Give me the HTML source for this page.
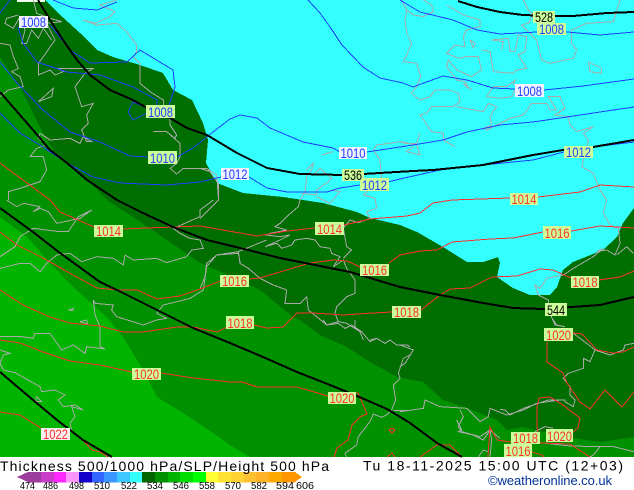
<!DOCTYPE html>
<html><head><meta charset="utf-8"><style>
html,body{margin:0;padding:0;background:#fff;width:634px;height:490px;overflow:hidden}
svg{display:block}
text{font-family:"Liberation Sans",sans-serif}
.g path{fill:none;stroke:#aaa;stroke-width:1;vector-effect:non-scaling-stroke}
.b{fill:none;stroke:#2040ff;stroke-width:1}
.r{fill:none;stroke:#ff3030;stroke-width:1}
.k{fill:none;stroke:#000;stroke-width:2}
.lt{font-size:14px;text-anchor:middle}
</style></head><body>
<svg width="634" height="490" viewBox="0 0 634 490" xmlns="http://www.w3.org/2000/svg">
<g shape-rendering="crispEdges">
<rect x="0" y="0" width="634" height="457" fill="#33ffff"/>
<polygon fill="#006e00" points="0,0 45,0 57,12 80,33 97,50 113,57 140,65 163,73 173,90 192,100 203,123 208,140 206,163 217,183 243,193 283,197 323,203 357,212 370,218 400,225 417,232 443,247 467,262 483,262 498,257 500,263 497,277 513,288 530,295 550,295 557,287 563,270 573,262 603,250 617,237 623,223 634,208 634,457 0,457"/>
<polygon fill="#009000" points="0,57 20,87 40,127 57,157 80,173 107,200 133,217 167,240 200,263 233,277 260,290 293,317 300,320 320,335 347,347 370,362 397,377 423,382 443,400 467,408 497,420 507,430 523,427 543,432 573,438 600,442 634,437 634,457 0,457"/>
<polygon fill="#00b400" points="0,217 27,237 50,263 73,287 107,317 123,337 143,370 157,397 183,413 213,433 230,445 250,457 0,457"/>
</g>
<g shape-rendering="crispEdges">
<rect x="17" y="0" width="28" height="2" fill="#f0fff0"/>
<g class="g" transform="scale(.33333)">
<path d="M350,0 300,15 345,35 330,50 285,70 250,60 290,75 350,70 380,95 410,135 410,155 400,170 420,190 420,250 450,275 490,300 490,325 510,360 510,375 530,405 525,415 500,395 460,395 500,395 540,430 540,470 530,490 510,505 530,522 550,505 620,505 650,525 655,590"/>
<path d="M100,0 110,40 150,55 185,65 140,70 165,120 130,170 115,190 115,225 150,210 165,225 190,215 170,205 240,205 280,205 255,220 225,260 245,320 280,310 260,345 265,370 245,390 260,425 275,425 250,410 240,430 210,415 150,420 120,400 115,415 140,435 110,445 90,470 130,470 140,510 120,545 60,565 25,575 25,600"/>
<path d="M55,45 20,55 15,70 40,85 60,50 75,90 65,130 80,130 95,90 115,115 130,85 155,120"/>
<path d="M0,130 30,135 40,170 55,205 35,215 60,230 70,260 25,270 0,290"/>
<path d="M115,305 160,265 155,290 115,305"/>
</g>
<g class="g" transform="translate(400,0) scale(.33333)">
<path d="M5,0 20,30 15,60 20,100 35,130 20,165 10,185 50,190 62,230 50,260 35,280 60,300 90,290 105,270 150,270 175,280 180,305 160,320 95,320 80,340 60,345 95,395 130,400 130,420 165,440"/>
<path d="M60,400 50,430 15,430 0,425"/>
<path d="M70,0 95,15 100,35 70,50 40,45 20,30"/>
<path d="M140,15 190,45 240,60 240,80 200,90 190,110 195,140 165,135 140,160 175,175 200,170 235,170 245,210 215,230 170,210 145,180 140,200 170,240 195,245 205,265 190,250 215,270"/>
<path d="M245,150 270,155 280,215 340,220 350,210 380,205 355,165 375,155 380,110 355,105 345,155 330,155 325,115 275,120 310,125 305,150"/>
<path d="M370,0 385,30 400,45 385,70 365,75 410,120 425,180 450,190 520,175 530,150 515,130 515,90 560,70 640,65 660,0"/>
<path d="M565,185 570,215 605,220 605,205 565,185"/>
<path d="M340,255 345,240 320,260 280,260 260,290 300,295 335,290 345,270"/>
<path d="M170,320 250,335 265,310 290,320 270,350 275,375 250,385 260,390 330,355 370,345 395,310 440,310 450,330 470,330 445,290 480,290 495,325 465,345 505,350 510,375 530,395 580,380 550,400 565,420 545,500 580,520 600,570 620,600"/>
<path d="M210,120 225,130 220,145 210,120"/>
</g>
<g class="g" transform="translate(200,140) scale(.33333)">
<path d="M0,85 30,95 55,130 55,180 25,210 0,235"/>
<path d="M320,90 340,70 335,90 320,110 315,155 300,180 295,200 260,230 240,250 225,260 260,270 210,280 200,285 240,290 270,285 240,300 195,320 230,310 245,325 275,315 285,300 320,295 345,300 360,320 390,325 395,340 420,350 400,380 430,360 440,385 465,420 465,460 440,470 410,500 405,520 415,545 380,555 350,530 325,510 320,470 300,490 255,490 260,450 220,435 180,415 145,385 120,370 115,335 50,345 20,370 15,410 0,445"/>
<path d="M115,335 200,300"/>
<path d="M430,355 455,330 440,320 430,265 450,240 475,248 510,235 500,215 530,205 525,175 490,165 545,120 540,60 520,30 530,15 600,5 650,15 660,45 620,35 640,20"/>
<path d="M305,160 350,165 350,150 385,125 395,115 360,85 340,105"/>
<path d="M350,170 390,190 420,155 390,150"/>
<path d="M365,45 400,35"/>
<path d="M415,545 440,550 480,575 490,600"/>
<path d="M510,600 530,595"/>
</g>
<g class="g" transform="translate(230,320) scale(.33333)">
<path d="M280,0 290,15 325,10 345,25 365,15 375,22 375,0"/>
<path d="M375,22 395,35 420,65 440,55 465,70 480,60 500,75 530,75 540,80"/>
<path d="M540,105 520,115 505,160 510,175 490,195 497,240 485,270 470,285 455,292 430,282 420,305 385,350 380,375 345,400 350,411"/>
<path d="M490,272 540,272"/>
</g>
<g class="g" transform="translate(400,200) scale(.33333)">
<path d="M620,0 610,40 630,75 655,85 660,130 645,165 620,150 590,155 610,145 580,170 520,205 490,225 440,235 420,265 405,255 415,285 445,300 450,340 465,375 495,380"/>
<path d="M0,435 40,450 15,490 0,500"/>
<path d="M650,165 680,140 700,160"/>
<path d="M180,630 190,650 175,680 185,695 240,710 270,690 300,715"/>
<path d="M0,635 70,625 75,600 120,620 200,625 240,665 265,650 270,625 320,645 370,630 410,610 480,600"/>
</g>
<g class="g" transform="translate(500,320) scale(.33333)">
<path d="M160,0 170,15 195,20"/>
<path d="M220,40 260,70 285,90 330,105 370,90 375,75 402,70"/>
<path d="M285,90 270,125 250,115 250,145 205,160 190,175 210,200 210,225 225,240 220,260 195,245 195,240 175,240 145,240 100,255 70,265 30,285 15,270 0,268"/>
<path d="M105,335 135,320 160,325"/>
<path d="M120,368 210,378 300,380 280,405 270,411"/>
<path d="M300,380 340,380 402,395"/>
</g>
<g class="g" transform="translate(320,420) scale(.33333)">
<path d="M410,0 425,30 415,35 460,45 490,60 510,30 515,60 510,110"/>
<path d="M475,110 490,90 505,95"/>
</g>
<g class="g" transform="translate(0,200) scale(.33333)">
<path d="M0,170 45,140 60,110 100,85 180,95 205,95 235,50 275,30 240,55 170,70 145,35 120,25 100,35 120,20 70,10 50,20 20,0"/>
<path d="M0,205 60,190 90,190 120,215 140,190 170,165 210,160 245,185 290,170 340,175 370,195 375,165 400,180 470,175 500,188 560,170 575,150 610,145 600,120 570,115 540,100 520,85 600,50 600,30 640,0"/>
<path d="M720,185 715,160 650,165 620,200 610,270 570,295 490,315 470,340 500,355 470,360 430,375 350,350 335,330 340,315 285,310 280,300 285,345 300,380 300,440 315,447 260,440 255,460 220,435 185,450 150,400 105,400 100,415 65,410 0,410"/>
<path d="M205,330 220,325 218,332 205,330"/>
<path d="M240,365 260,360 262,372 240,365"/>
<path d="M0,450 30,460 10,465 0,490 10,510 45,518 120,560 125,575 165,570 195,585 175,600 190,620 225,615 250,630 215,620 225,650 210,670 215,690"/>
<path d="M105,605 110,590 125,605 105,605"/>
</g>
<!-- blue -->
<path class="b" d="M53,0 73,8 97,10 117,2"/>
<path class="b" d="M0,13 10,0"/>
<path class="b" d="M18,27 23,43 37,62 67,72 100,75 133,87 157,100 157,107"/>
<path class="b" d="M147,108 133,102 128,112 133,120 147,113"/>
<path class="b" d="M50,25 70,50 90,63 127,62 140,50 173,70 175,87 168,108"/>
<path class="b" d="M0,62 17,83 43,110 70,132 100,142 130,156 148,157"/>
<path class="b" d="M177,157 193,148 213,132 230,119 240,115 257,118 270,128 303,142 333,148 340,152"/>
<path class="b" d="M367,152 413,145 443,140 467,132 500,125 533,122 567,117 600,112 634,107"/>
<path class="b" d="M0,113 20,133 43,147 67,163 93,177 120,183 167,185 200,182 221,177"/>
<path class="b" d="M249,177 267,188 287,192 327,192 340,188 360,185"/>
<path class="b" d="M388,182 400,179 440,170 483,165 533,160 564,152"/>
<path class="b" d="M593,147 634,142"/>
<path class="b" d="M308,0 320,13 330,27 342,45 363,67 380,78 403,83 413,87 443,76 467,80 493,88 515,89"/>
<path class="b" d="M544,90 583,86 634,79"/>
<path class="b" d="M400,0 420,12 453,20 477,30 500,34 537,32 567,32 600,35 634,32"/>
<!-- red -->
<path class="r" d="M0,163 27,183 50,200 60,212 94,227"/>
<path class="r" d="M123,229 147,228 200,226 257,236 287,231 315,228"/>
<path class="r" d="M344,225 370,219 407,216 420,213 433,203 452,200 510,198"/>
<path class="r" d="M538,197 580,192 600,185 634,187"/>
<path class="r" d="M0,232 17,245 43,258 73,275 97,288 117,290 137,290 157,299 180,296 203,288 220,281"/>
<path class="r" d="M249,279 260,278 280,272 310,263 333,260 347,261 360,267"/>
<path class="r" d="M389,263 400,255 420,251 437,250 452,242 490,239 513,238 543,232"/>
<path class="r" d="M571,231 600,226 634,228"/>
<path class="r" d="M0,290 23,305 50,317 70,323 100,326 123,332 143,332 177,327 193,327 217,332 227,327"/>
<path class="r" d="M254,325 267,328 283,327 297,313 313,313 343,315 373,313 392,312"/>
<path class="r" d="M421,310 440,295 450,289 470,288 492,277 517,276 540,269 553,270 571,278"/>
<path class="r" d="M599,280 620,277 634,271"/>
<path class="r" d="M0,340 20,343 43,352 70,361 100,365 132,372"/>
<path class="r" d="M161,373 193,378 230,382 242,382 257,387 297,387 328,396"/>
<path class="r" d="M356,393 358,393 367,414 360,417 352,425 348,440 337,448 334,457"/>
<path class="r" d="M420,457 437,445 450,445 462,457"/>
<path class="r" d="M389,430 392,428 395,430 392,433Z"/>
<path class="r" d="M387,457 392,453 395,457"/>
<path class="r" d="M573,333 582,334 597,350 613,353 623,352 634,347"/>
<path class="r" d="M547,342 547,362 563,373 567,383 580,402 590,409 605,390 622,407 634,392"/>
<path class="r" d="M573,432 578,428 580,418 563,405 550,397 539,398 537,407 537,427 540,443 570,444 590,457"/>
<path class="r" d="M488,457 490,427 497,440 511,442"/>
<path class="r" d="M532,452 542,455 544,457"/>
<path class="r" d="M0,412 20,415 41,428"/>
<path class="r" d="M70,430 80,437 92,450 100,452 108,457"/>
<!-- black -->
<path class="k" d="M458,1 477,7 500,12 523,15 550,16 573,16 607,13 634,12"/>
<path class="k" d="M38,0 50,20 63,40 77,60 90,75 110,90 133,100 147,108 170,118 187,128 207,135 237,153 267,168 300,174 343,175 363,174 413,171 433,170 483,165 533,155 563,150 593,147 634,140"/>
<path class="k" d="M0,92 13,107 33,130 50,150 67,163 87,180 117,200 143,213 173,227 207,240 240,248 280,258 310,264 350,272 400,287 440,295 483,303 513,308 543,309 600,305 634,297"/>
<path class="k" d="M0,208 33,232 60,253 100,282 117,290 157,310 193,328 230,343 263,357 297,372 330,385 357,396 387,409 410,423 437,443 462,457"/>
<path class="k" d="M0,372 33,400 57,420 83,440 112,457"/>
</g>
<!-- labels -->
<g shape-rendering="crispEdges">
<rect x="19" y="16" width="29" height="12" fill="#f0f0ff"/>
<rect x="146" y="105" width="29" height="13" fill="#ccff99"/>
<rect x="148" y="151" width="29" height="13" fill="#ccff99"/>
<rect x="221" y="168" width="28" height="12" fill="#f0f0ff"/>
<rect x="339" y="147" width="28" height="12" fill="#f0f0ff"/>
<rect x="342" y="169" width="22" height="12" fill="#ccff99"/>
<rect x="360" y="178" width="29" height="13" fill="#ccff99"/>
<rect x="533" y="11" width="22" height="12" fill="#ccff99"/>
<rect x="537" y="23" width="29" height="12" fill="#ccff99"/>
<rect x="515" y="84" width="29" height="13" fill="#f0f0ff"/>
<rect x="564" y="146" width="29" height="12" fill="#ccff99"/>
<rect x="510" y="193" width="28" height="12" fill="#ccff99"/>
<rect x="315" y="222" width="29" height="13" fill="#ccff99"/>
<rect x="94" y="225" width="29" height="12" fill="#ccff99"/>
<rect x="360" y="264" width="29" height="12" fill="#ccff99"/>
<rect x="220" y="275" width="29" height="12" fill="#ccff99"/>
<rect x="543" y="226" width="28" height="13" fill="#ccff99"/>
<rect x="226" y="316" width="28" height="13" fill="#ccff99"/>
<rect x="392" y="306" width="29" height="12" fill="#ccff99"/>
<rect x="571" y="276" width="28" height="12" fill="#ccff99"/>
<rect x="545" y="303" width="22" height="13" fill="#ccff99"/>
<rect x="544" y="328" width="29" height="13" fill="#ccff99"/>
<rect x="132" y="368" width="29" height="12" fill="#ccff99"/>
<rect x="328" y="392" width="28" height="12" fill="#ccff99"/>
<rect x="41" y="428" width="29" height="12" fill="#f8f0f0"/>
<rect x="511" y="432" width="29" height="12" fill="#ccff99"/>
<rect x="546" y="429" width="27" height="13" fill="#ccff99"/>
<rect x="504" y="444" width="28" height="13" fill="#ccff99"/>
</g>
<g class="lt" fill="#2040ff">
<text x="33.5" y="27" textLength="25" lengthAdjust="spacingAndGlyphs">1008</text>
<text x="160.5" y="117" textLength="25" lengthAdjust="spacingAndGlyphs">1008</text>
<text x="162.5" y="163" textLength="25" lengthAdjust="spacingAndGlyphs">1010</text>
<text x="235" y="179" textLength="25" lengthAdjust="spacingAndGlyphs">1012</text>
<text x="353" y="158" textLength="25" lengthAdjust="spacingAndGlyphs">1010</text>
<text x="374.5" y="190" textLength="25" lengthAdjust="spacingAndGlyphs">1012</text>
<text x="551.5" y="34" textLength="25" lengthAdjust="spacingAndGlyphs">1008</text>
<text x="529.5" y="96" textLength="25" lengthAdjust="spacingAndGlyphs">1008</text>
<text x="578.5" y="157" textLength="25" lengthAdjust="spacingAndGlyphs">1012</text>
</g>
<g class="lt" fill="#000">
<text x="353" y="180" textLength="18" lengthAdjust="spacingAndGlyphs">536</text>
<text x="544" y="22" textLength="18" lengthAdjust="spacingAndGlyphs">528</text>
<text x="556" y="315" textLength="18" lengthAdjust="spacingAndGlyphs">544</text>
</g>
<g class="lt" fill="#ff3030">
<text x="524" y="204" textLength="25" lengthAdjust="spacingAndGlyphs">1014</text>
<text x="329.5" y="234" textLength="25" lengthAdjust="spacingAndGlyphs">1014</text>
<text x="108.5" y="236" textLength="25" lengthAdjust="spacingAndGlyphs">1014</text>
<text x="374.5" y="275" textLength="25" lengthAdjust="spacingAndGlyphs">1016</text>
<text x="234.5" y="286" textLength="25" lengthAdjust="spacingAndGlyphs">1016</text>
<text x="557" y="238" textLength="25" lengthAdjust="spacingAndGlyphs">1016</text>
<text x="240" y="328" textLength="25" lengthAdjust="spacingAndGlyphs">1018</text>
<text x="406.5" y="317" textLength="25" lengthAdjust="spacingAndGlyphs">1018</text>
<text x="585" y="287" textLength="25" lengthAdjust="spacingAndGlyphs">1018</text>
<text x="558.5" y="340" textLength="25" lengthAdjust="spacingAndGlyphs">1020</text>
<text x="146.5" y="379" textLength="25" lengthAdjust="spacingAndGlyphs">1020</text>
<text x="342" y="403" textLength="25" lengthAdjust="spacingAndGlyphs">1020</text>
<text x="55.5" y="439" textLength="25" lengthAdjust="spacingAndGlyphs">1022</text>
<text x="525.5" y="443" textLength="25" lengthAdjust="spacingAndGlyphs">1018</text>
<text x="559.5" y="441" textLength="25" lengthAdjust="spacingAndGlyphs">1020</text>
<text x="518" y="456" textLength="25" lengthAdjust="spacingAndGlyphs">1016</text>
</g>
<!-- legend -->
<g shape-rendering="crispEdges">
<polygon fill="#9c3c9c" points="17,477 28,472 28,482"/>
<rect x="28" y="472" width="13" height="10.500" fill="#9c3c9c"/>
<rect x="41" y="472" width="13" height="10.500" fill="#c83cc8"/>
<rect x="54" y="472" width="12" height="10.500" fill="#ff28ff"/>
<rect x="66" y="472" width="13" height="10.500" fill="#ff96ff"/>
<rect x="79" y="472" width="13" height="10.500" fill="#1400c8"/>
<rect x="92" y="472" width="12" height="10.500" fill="#3264ff"/>
<rect x="104" y="472" width="13" height="10.500" fill="#3c96ff"/>
<rect x="117" y="472" width="13" height="10.500" fill="#3cc8ff"/>
<rect x="130" y="472" width="12" height="10.500" fill="#33ffff"/>
<rect x="142" y="472" width="13" height="10.500" fill="#006400"/>
<rect x="155" y="472" width="13" height="10.500" fill="#009000"/>
<rect x="168" y="472" width="12" height="10.500" fill="#00b400"/>
<rect x="180" y="472" width="13" height="10.500" fill="#00dc00"/>
<rect x="193" y="472" width="13" height="10.500" fill="#00ff00"/>
<rect x="206" y="472" width="12" height="10.500" fill="#ffff32"/>
<rect x="218" y="472" width="13" height="10.500" fill="#ffe132"/>
<rect x="231" y="472" width="13" height="10.500" fill="#ffd232"/>
<rect x="244" y="472" width="12" height="10.500" fill="#ffc032"/>
<rect x="256" y="472" width="13" height="10.500" fill="#ffb428"/>
<rect x="269" y="472" width="13" height="10.500" fill="#ffaa00"/>
<rect x="282" y="472" width="13" height="10.500" fill="#ff9600"/>
<polygon fill="#ff9600" points="295,472 302,477 295,482"/>
</g>
<g font-size="10" fill="#000">
<text x="20" y="489" textLength="15" lengthAdjust="spacingAndGlyphs">474</text>
<text x="43" y="489" textLength="15" lengthAdjust="spacingAndGlyphs">486</text>
<text x="69" y="489" textLength="15" lengthAdjust="spacingAndGlyphs">498</text>
<text x="94" y="489" textLength="16" lengthAdjust="spacingAndGlyphs">510</text>
<text x="121" y="489" textLength="16" lengthAdjust="spacingAndGlyphs">522</text>
<text x="147" y="489" textLength="16" lengthAdjust="spacingAndGlyphs">534</text>
<text x="173" y="489" textLength="16" lengthAdjust="spacingAndGlyphs">546</text>
<text x="199" y="489" textLength="16" lengthAdjust="spacingAndGlyphs">558</text>
<text x="225" y="489" textLength="16" lengthAdjust="spacingAndGlyphs">570</text>
<text x="251" y="489" textLength="16" lengthAdjust="spacingAndGlyphs">582</text>
<text x="276" y="489" textLength="18" lengthAdjust="spacingAndGlyphs">594</text>
<text x="296" y="489" textLength="18" lengthAdjust="spacingAndGlyphs">606</text>
</g>
<text x="0" y="471" font-size="14" fill="#000" textLength="329" lengthAdjust="spacing">Thickness 500/1000 hPa/SLP/Height 500 hPa</text>
<text x="363" y="470.500" font-size="14" fill="#000" textLength="260" lengthAdjust="spacing">Tu 18-11-2025 15:00 UTC (12+03)</text>
<text x="488" y="485" font-size="13" fill="#003399" textLength="124" lengthAdjust="spacing">©weatheronline.co.uk</text>
</svg>
</body></html>
